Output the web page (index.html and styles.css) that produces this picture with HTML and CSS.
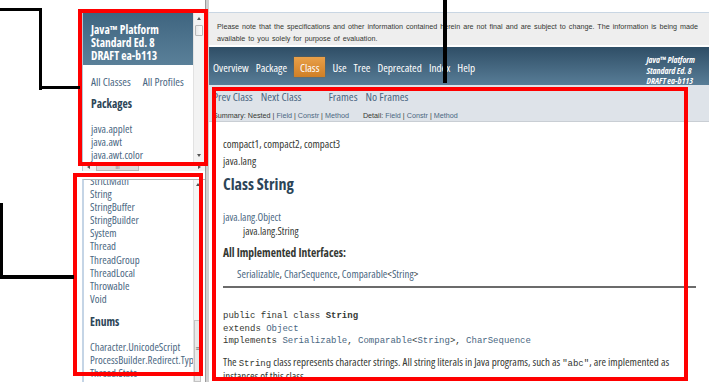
FILE: index.html
```html
<!DOCTYPE html>
<html>
<head>
<meta charset="utf-8">
<link rel="stylesheet" href="styles.css">
</head>
<body>
<div class="screen">
  <div class="shot">
    <div class="leftcol">
      <div class="pkgframe">
        <div class="frame-row">
          <div class="pkgcontent">
            <div class="bar">Java™ Platform<br>Standard Ed. 8<br>DRAFT ea-b113</div>
            <div class="indexlinks"><span>All Classes</span><span>All Profiles</span></div>
            <div class="pkghead">Packages</div>
            <ul class="plist">
              <li>java.applet</li>
              <li>java.awt</li>
              <li>java.awt.color</li>
            </ul>
          </div>
          <div class="vscroll">
            <span class="arrow up"></span>
            <span class="thumb top"></span>
            <span class="spacer"></span>
            <span class="arrow down"></span>
          </div>
        </div>
        <div class="hscroll">
          <span class="harrow left"></span>
          <span class="hthumb">III</span>
          <span class="spacer"></span>
          <span class="harrow right"></span>
        </div>
      </div>
      <div class="clsframe">
        <div class="clscontent">
          <ul class="clist">
            <li>StrictMath</li>
            <li>String</li>
            <li>StringBuffer</li>
            <li>StringBuilder</li>
            <li>System</li>
            <li>Thread</li>
            <li>ThreadGroup</li>
            <li>ThreadLocal</li>
            <li>Throwable</li>
            <li>Void</li>
          </ul>
          <div class="enumhead">Enums</div>
          <ul class="clist">
            <li>Character.UnicodeScript</li>
            <li>ProcessBuilder.Redirect.Type</li>
            <li>Thread.State</li>
          </ul>
        </div>
        <div class="vscroll slim">
          <span class="arrow up"></span>
          <span class="spacer"></span>
          <span class="thumb low">≡</span>
        </div>
      </div>
    </div>
    <div class="splitter"></div>
    <div class="main">
      <div class="banner">Please note that the specifications and other information contained herein are not final and are subject to change. The information is being made available to you solely for purpose of evaluation.</div>
      <div class="topnav">
        <ul class="navlist">
          <li>Overview</li>
          <li>Package</li>
          <li class="active">Class</li>
          <li>Use</li>
          <li>Tree</li>
          <li>Deprecated</li>
          <li>Index</li>
          <li>Help</li>
        </ul>
        <div class="aboutlang">Java™ Platform<br>Standard Ed. 8<br>DRAFT ea-b113</div>
      </div>
      <div class="subnav">
        <div class="subrow1">
          <span>Prev Class</span><span>Next Class</span>
          <span class="gapl">Frames</span><span>No Frames</span>
        </div>
        <div class="subrow2">
          <span>Summary: Nested | <a>Field</a> | <a>Constr</a> | <a>Method</a></span>
          <span>Detail: <a>Field</a> | <a>Constr</a> | <a>Method</a></span>
        </div>
      </div>
      <div class="content">
        <div class="profiles">compact1, compact2, compact3</div>
        <div class="pkgname">java.lang</div>
        <h2 class="title">Class String</h2>
        <div class="inherit">
          <a>java.lang.Object</a>
          <div class="inh2">java.lang.String</div>
        </div>
        <div class="implhead">All Implemented Interfaces:</div>
        <div class="impllist"><a>Serializable</a>, <a>CharSequence</a>, <a>Comparable</a>&lt;<a>String</a>&gt;</div>
        <hr class="rule">
        <pre class="sig">public final class <b>String</b>
extends <a>Object</a>
implements <a>Serializable</a>, <a>Comparable</a>&lt;<a>String</a>&gt;, <a>CharSequence</a></pre>
        <p class="desc">The <code>String</code> class represents character strings. All string literals in Java programs, such as <code>"abc"</code>, are implemented as instances of this class.</p>
      </div>
    </div>
  </div>

  <div class="callout box-a"></div>
  <div class="callout box-b"></div>
  <div class="callout box-c"></div>

  <div class="line l1a"></div>
  <div class="line l1b"></div>
  <div class="line l1c"></div>
  <div class="line l2a"></div>
  <div class="line l2b"></div>
  <div class="line l3"></div>
</div>
</body>
</html>
```

FILE: styles.css
```css
html, body {
  margin: 0;
  padding: 0;
  background: #ffffff;
}
body {
  font-family: "Open Sans", "Liberation Sans", Arial, sans-serif;
  font-stretch: 75%;
  color: #353833;
}
ul {
  list-style: none;
  margin: 0;
  padding: 0;
}
a {
  color: #4a6782;
  text-decoration: none;
}
.screen {
  position: relative;
  width: 709px;
  height: 382px;
  overflow: hidden;
}
.shot {
  display: flex;
  height: 382px;
  padding-top: 12px;
  padding-left: 82px;
  box-sizing: border-box;
}

/* ---------- left column ---------- */
.leftcol {
  width: 123px;
  display: flex;
  flex-direction: column;
}
.pkgframe {
  height: 159px;
  display: flex;
  flex-direction: column;
  border-left: 1px solid #b8c6d4;
}
.frame-row {
  flex: 1;
  display: flex;
  min-height: 0;
}
.pkgcontent {
  flex: 1;
  padding-top: 1px;
  overflow: hidden;
  white-space: nowrap;
}
.bar {
  background: linear-gradient(#3f6580, #5a8099);
  color: #ffffff;
  font-weight: bold;
  font-size: 11.5px;
  line-height: 13px;
  padding: 10px 0 3px 8px;
  height: 39px;
}
.indexlinks {
  display: flex;
  gap: 12px;
  padding: 10px 0 0 8px;
  font-size: 11.3px;
  line-height: 13px;
  color: #4a6782;
}
.pkghead {
  padding: 9px 0 0 8px;
  font-size: 11.5px;
  font-weight: bold;
  line-height: 14px;
  color: #2c4557;
}
.plist {
  padding: 11px 0 0 8px;
  font-size: 10.8px;
  line-height: 13px;
  color: #4a6782;
}
.vscroll {
  width: 10px;
  margin-right: 1px;
  background: #f3f3f3;
  border-left: 1px solid #e2e2e2;
  display: flex;
  flex-direction: column;
  align-items: center;
}
.vscroll .spacer { flex: 1; }
.arrow {
  width: 0;
  height: 0;
  margin: 5px 0;
  border-left: 2px solid transparent;
  border-right: 2px solid transparent;
}
.arrow.up { border-bottom: 3px solid #555; }
.arrow.down { border-top: 3px solid #555; }
.thumb.top {
  width: 8px;
  height: 11px;
  background: linear-gradient(90deg, #e8e8e8, #fdfdfd);
  border: 1px solid #b9b9b9;
  box-sizing: border-box;
  border-radius: 1px;
}
.hscroll {
  height: 8px;
  display: flex;
  align-items: center;
  background: #f3f3f3;
  border-top: 1px solid #e2e2e2;
}
.hscroll .spacer { flex: 1; }
.harrow {
  width: 0;
  height: 0;
  margin: 0 4px;
  border-top: 2px solid transparent;
  border-bottom: 2px solid transparent;
}
.harrow.left { border-right: 3px solid #555; }
.harrow.right { border-left: 3px solid #555; }
.hthumb {
  width: 43px;
  height: 7px;
  margin-left: 2px;
  background: #dcdcdc;
  border: 1px solid #b9b9b9;
  box-sizing: border-box;
  font-size: 5px;
  line-height: 5px;
  text-align: center;
  color: #777;
  font-family: "Liberation Sans", sans-serif;
}
.clsframe {
  flex: 1;
  margin-top: 8px;
  display: flex;
  border-top: 1px solid #b4b4b4;
  border-left: 2px solid #c5d5e6;
  min-height: 0;
}
.clscontent {
  flex: 1;
  overflow: hidden;
  padding-left: 6px;
  white-space: nowrap;
}
.clist {
  font-size: 10.8px;
  line-height: 13.1px;
  color: #4a6782;
}
.clscontent > .clist:first-child {
  margin-top: -6px;
}
.enumhead {
  font-size: 11.5px;
  font-weight: bold;
  color: #2c4557;
  line-height: 14px;
  padding: 10px 0 11px 0;
}
.vscroll.slim {
  width: 7px;
  margin-right: 4px;
  background: #f6f6f6;
}
.vscroll.slim .arrow { margin-top: 3px; }
.thumb.low {
  width: 7px;
  height: 62px;
  background: #e9e9e9;
  border: 1px solid #c3c3c3;
  box-sizing: border-box;
  font-size: 7px;
  line-height: 56px;
  text-align: center;
  color: #555;
  font-family: "Liberation Sans", sans-serif;
}
.splitter {
  width: 3px;
  background: #cfcfcf;
  border-left: 1px solid #9a9a9a;
  margin-top: -12px;
}

/* ---------- main column ---------- */
.main {
  flex: 1;
  display: flex;
  flex-direction: column;
  min-width: 0;
}
.banner {
  height: 36px;
  box-sizing: border-box;
  background: #eeeeee;
  border-top: 1px solid #c9d6e3;
  padding: 8px 4px 0 8px;
  font-family: "Liberation Sans", Arial, sans-serif;
  font-stretch: normal;
  font-size: 7.2px;
  line-height: 12px;
  color: #353833;
  word-spacing: 1px;
}
.topnav {
  margin-top: 2px;
  height: 38px;
  background: linear-gradient(#2f4e66, #587d97);
  display: flex;
  align-items: center;
  justify-content: space-between;
  color: #ffffff;
}
.navlist {
  display: flex;
  align-items: center;
  gap: 7px;
  padding-left: 4px;
  font-size: 11.2px;
  margin-top: 2px;
}
.navlist li {
  line-height: 18px;
  padding-top: 2px;
}
.navlist .active {
  background: linear-gradient(#e9a049, #cf7f26);
  padding-left: 6px;
  padding-right: 6px;
  box-shadow: 0 0 1px #a0600d;
}
.aboutlang {
  font-size: 8.8px;
  font-weight: bold;
  font-style: italic;
  line-height: 10.5px;
  padding-right: 14px;
  margin-top: 10px;
}
.subnav {
  height: 39px;
  box-sizing: border-box;
  background: #dee3e9;
  border-bottom: 1px solid #c9ced4;
  padding: 5px 0 0 4px;
}
.subrow1 {
  display: flex;
  gap: 8px;
  font-size: 11.6px;
  line-height: 14px;
  color: #4a6782;
}
.subrow1 .gapl { margin-left: 19px; }
.subrow2 {
  display: flex;
  gap: 14px;
  margin-top: 7px;
  font-family: "Liberation Sans", Arial, sans-serif;
  font-stretch: normal;
  font-size: 7.2px;
  line-height: 10px;
  color: #353833;
}
.content {
  padding: 16px 13px 0 14px;
}
.profiles {
  font-size: 10.8px;
  line-height: 12px;
}
.pkgname {
  font-size: 10.8px;
  line-height: 12px;
  margin-top: 5px;
}
.title {
  font-size: 16px;
  font-weight: bold;
  line-height: 18px;
  margin: 8px 0 0 0;
  color: #2c4557;
}
.inherit {
  margin-top: 17px;
  font-size: 10.5px;
  line-height: 14px;
}
.inh2 {
  padding-left: 20px;
}
.implhead {
  margin-top: 9px;
  font-size: 11.5px;
  font-weight: bold;
  line-height: 12px;
}
.impllist {
  margin-top: 9px;
  padding-left: 14px;
  font-size: 10.8px;
  line-height: 12px;
}
.rule {
  margin: 6px 0 0 0;
  border: 0;
  border-top: 2px solid #6b6b6b;
  height: 0;
}
.sig {
  margin: 22px 0 0 0;
  font-family: "Liberation Mono", "Courier New", monospace;
  font-stretch: normal;
  font-size: 9px;
  line-height: 12.5px;
  color: #353833;
}
.desc {
  margin: 8px 0 0 0;
  font-size: 11px;
  line-height: 12.5px;
}
.desc code {
  font-family: "Liberation Mono", monospace;
  font-stretch: normal;
  font-size: 9px;
}

/* ---------- annotation overlays ---------- */
.callout {
  position: absolute;
  border: 4px solid #ff0000;
  box-sizing: border-box;
}
.box-a { left: 78px; top: 9px; width: 130px; height: 157px; }
.box-b { left: 73px; top: 173px; width: 130px; height: 203px; }
.box-c { left: 212px; top: 87px; width: 476px; height: 294px; }
.line {
  position: absolute;
  background: #000000;
}
.l1a { left: 0; top: 8px; width: 42px; height: 3px; }
.l1b { left: 39px; top: 8px; width: 3px; height: 82px; }
.l1c { left: 39px; top: 86px; width: 41px; height: 3px; }
.l2a { left: 0; top: 203px; width: 3px; height: 76px; }
.l2b { left: 0; top: 275px; width: 74px; height: 4px; }
.l3 { left: 443px; top: 0; width: 4px; height: 83px; }
```
